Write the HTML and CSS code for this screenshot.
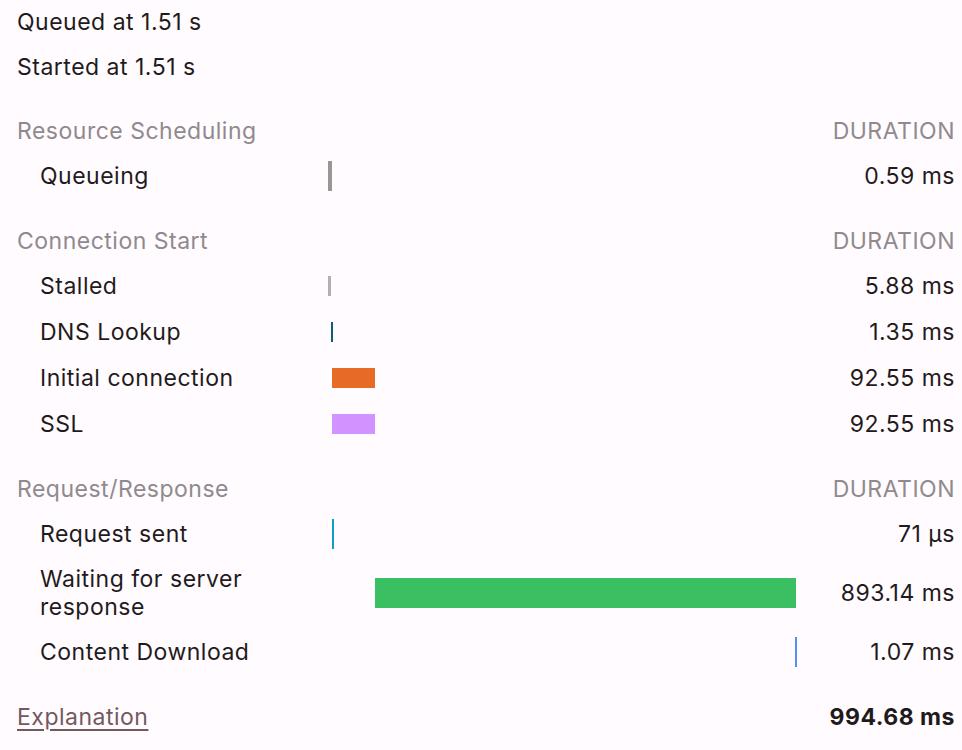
FILE: index.html
```html
<!DOCTYPE html>
<html lang="en">
<head>
<meta charset="utf-8">
<title>Timing</title>
<link rel="stylesheet" href="styles.css">
</head>
<body>
<div class="timing">
  <div class="meta">Queued at 1.51 s</div>
  <div class="meta">Started at 1.51 s</div>

  <section class="group">
    <div class="row head"><span class="label">Resource Scheduling</span><span class="track"></span><span class="dur">DURATION</span></div>
    <div class="row"><span class="label">Queueing</span><span class="track"><span class="bar tall queueing" style="margin-left:0px;width:4px"></span></span><span class="dur">0.59 ms</span></div>
  </section>

  <section class="group">
    <div class="row head"><span class="label">Connection Start</span><span class="track"></span><span class="dur">DURATION</span></div>
    <div class="row"><span class="label">Stalled</span><span class="track"><span class="bar stalled" style="margin-left:0px;width:3px"></span></span><span class="dur">5.88 ms</span></div>
    <div class="row"><span class="label">DNS Lookup</span><span class="track"><span class="bar dns" style="margin-left:3px;width:2px"></span></span><span class="dur">1.35 ms</span></div>
    <div class="row"><span class="label">Initial connection</span><span class="track"><span class="bar connect" style="margin-left:4px;width:43px"></span></span><span class="dur">92.55 ms</span></div>
    <div class="row"><span class="label">SSL</span><span class="track"><span class="bar ssl" style="margin-left:4px;width:43px"></span></span><span class="dur">92.55 ms</span></div>
  </section>

  <section class="group">
    <div class="row head"><span class="label">Request/Response</span><span class="track"></span><span class="dur">DURATION</span></div>
    <div class="row"><span class="label">Request sent</span><span class="track"><span class="bar tall sent" style="margin-left:4px;width:2px"></span></span><span class="dur">71 µs</span></div>
    <div class="row"><span class="label">Waiting for server response</span><span class="track"><span class="bar tall waiting" style="margin-left:47px;width:421px"></span></span><span class="dur">893.14 ms</span></div>
    <div class="row"><span class="label">Content Download</span><span class="track"><span class="bar tall download" style="margin-left:467px;width:2px"></span></span><span class="dur">1.07 ms</span></div>
  </section>

  <div class="footer">
    <a class="explain" href="#">Explanation</a>
    <span class="total">994.68 ms</span>
  </div>
</div>
</body>
</html>
```

FILE: styles.css
```css
html, body {
  margin: 0;
  padding: 0;
  background: #fffbfe;
}

body {
  font-family: Inter, "Noto Sans", sans-serif;
  font-size: 23px;
  letter-spacing: 0.5px;
  color: #1f1b1d;
}

.timing {
  padding: 0 7px 0 17px;
}

.meta {
  height: 45px;
  line-height: 45px;
}

.group {
  margin-top: 19px;
}

.group + .group {
  margin-top: 20px;
}

.row {
  display: grid;
  grid-template-columns: 311px 469px 1fr;
  align-items: center;
  min-height: 46px;
  padding: 8px 0;
  box-sizing: border-box;
  line-height: 28px;
}

.row.head {
  min-height: 44px;
  padding: 0;
  color: #8f8a8d;
}

.row .label {
  padding-left: 23px;
  padding-right: 20px;
}

.row.head .label {
  padding-left: 0;
  padding-right: 0;
}

.track {
  display: flex;
  align-items: center;
}

.dur {
  text-align: right;
}

.bar {
  display: block;
  height: 20px;
  flex: none;
}

.bar.tall {
  height: 30px;
}

.queueing { background: #9a9696; }
.stalled { background: #b3afaf; }
.dns { background: #0b5f7a; }
.connect { background: #e86a27; }
.ssl { background: #d093ff; }
.sent { background: #0e9fc4; }
.waiting { background: #3abf62; }
.download { background: #4f8ff7; }

.footer {
  display: flex;
  justify-content: space-between;
  align-items: center;
  height: 46px;
  margin-top: 19px;
}

.explain {
  color: #73595f;
  text-decoration: underline;
  text-decoration-thickness: 2px;
  text-underline-offset: 4px;
}

.total {
  font-weight: 700;
  color: #1f1b1d;
}
```
